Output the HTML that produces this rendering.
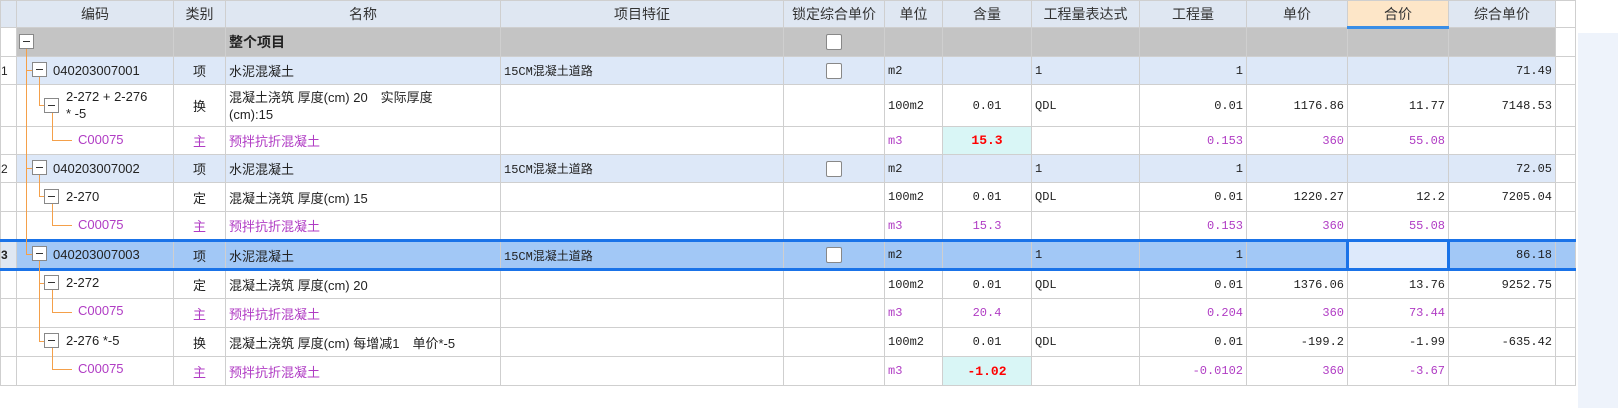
<!DOCTYPE html>
<html><head><meta charset="utf-8"><style>
*{margin:0;padding:0;box-sizing:border-box}
body{width:1618px;height:408px;background:#fff;position:relative;overflow:hidden;font-family:"Liberation Sans","Noto Sans CJK SC",sans-serif;font-size:13px;color:#222}
table{position:absolute;left:0;top:0;border-collapse:collapse;table-layout:fixed;width:1575px}
td,th{border:1px solid #cfcfcf;white-space:nowrap;overflow:hidden;padding:0 3px;vertical-align:middle}
th{background:#dfe7f2;font-weight:normal;font-size:14px;color:#333;height:27px;text-align:center}
th.hj{background:#fde6c8;border-bottom:3px solid #3a8ee6}
.n{font-family:"Liberation Mono","Noto Sans CJK SC",monospace;font-size:12px;text-align:right}
.l{font-family:"Liberation Mono","Noto Sans CJK SC",monospace;font-size:12px;text-align:left}
.c{text-align:center}
.p{color:#b03cc4}
.tot td{background:#c4c4c4}
.it td{background:#dde8f8}
.sel td{background:#a2c8f6;border-top:3px solid #1a73e8;border-bottom:3px solid #1a73e8}
.cb{display:inline-block;width:16px;height:16px;background:#fff;border:1px solid #888;border-radius:2px;vertical-align:middle}
.hl{background:#d9f6f6!important}
.red{color:#f00;font-weight:bold;font-size:13px;font-family:"Liberation Mono",monospace}
td.rn{background:#fff;padding:0;font-size:12px}
.box{position:absolute;width:15px;height:15px;border:1px solid #888;background:#fff}
.box:after{content:"";position:absolute;left:3px;top:6px;width:7px;height:1px;background:#333}
.ln{position:absolute;background:#f4a04a}
.code{position:absolute;font-family:"Liberation Sans",sans-serif;font-size:13px;line-height:15px}
</style></head><body>
<div style="position:absolute;left:1578px;top:0;width:40px;height:408px;background:#eef3fb"></div>
<div style="position:absolute;left:1578px;top:0;width:40px;height:33px;background:#fff"></div>
<table>
<colgroup><col style="width:16px"><col style="width:157px"><col style="width:52px"><col style="width:275px"><col style="width:283px"><col style="width:101px"><col style="width:58px"><col style="width:89px"><col style="width:108px"><col style="width:107px"><col style="width:101px"><col style="width:101px"><col style="width:107px"><col style="width:20px"></colgroup>
<tr><th></th><th>编码</th><th>类别</th><th>名称</th><th>项目特征</th><th>锁定综合单价</th><th>单位</th><th>含量</th><th>工程量表达式</th><th>工程量</th><th>单价</th><th class="hj">合价</th><th>综合单价</th><th style="background:#fff"></th></tr>
<tr class="tot" style="height:29px"><td class="rn"></td><td></td><td></td><td style="font-weight:bold;font-size:14px">整个项目</td><td></td><td class="c"><span class="cb"></span></td><td></td><td></td><td></td><td></td><td></td><td></td><td></td><td style="background:#fff"></td></tr>
<tr class="it" style="height:28px"><td class="rn">1</td><td></td><td class="c">项</td><td>水泥混凝土</td><td class="l">15CM混凝土道路</td><td class="c"><span class="cb"></span></td><td class="l">m2</td><td></td><td class="l">1</td><td class="n">1</td><td></td><td></td><td class="n">71.49</td><td style="background:#fff"></td></tr>
<tr style="height:42px"><td class="rn"></td><td></td><td class="c">换</td><td style="line-height:17px">混凝土浇筑 厚度(cm) 20　实际厚度<br>(cm):15</td><td></td><td></td><td class="l">100m2</td><td class="n" style="text-align:center">0.01</td><td class="l">QDL</td><td class="n">0.01</td><td class="n">1176.86</td><td class="n">11.77</td><td class="n">7148.53</td><td></td></tr>
<tr style="height:28px"><td class="rn"></td><td></td><td class="c p">主</td><td class="p">预拌抗折混凝土</td><td></td><td></td><td class="l p">m3</td><td class="hl c red">15.3</td><td></td><td class="n p">0.153</td><td class="n p">360</td><td class="n p">55.08</td><td></td><td></td></tr>
<tr class="it" style="height:28px"><td class="rn">2</td><td></td><td class="c">项</td><td>水泥混凝土</td><td class="l">15CM混凝土道路</td><td class="c"><span class="cb"></span></td><td class="l">m2</td><td></td><td class="l">1</td><td class="n">1</td><td></td><td></td><td class="n">72.05</td><td style="background:#fff"></td></tr>
<tr style="height:29px"><td class="rn"></td><td></td><td class="c">定</td><td>混凝土浇筑 厚度(cm) 15</td><td></td><td></td><td class="l">100m2</td><td class="n" style="text-align:center">0.01</td><td class="l">QDL</td><td class="n">0.01</td><td class="n">1220.27</td><td class="n">12.2</td><td class="n">7205.04</td><td></td></tr>
<tr style="height:29px"><td class="rn"></td><td></td><td class="c p">主</td><td class="p">预拌抗折混凝土</td><td></td><td></td><td class="l p">m3</td><td class="n p" style="text-align:center">15.3</td><td></td><td class="n p">0.153</td><td class="n p">360</td><td class="n p">55.08</td><td></td><td></td></tr>
<tr class="sel" style="height:29px"><td class="rn" style="background:#dfe7f2;font-weight:bold">3</td><td></td><td class="c">项</td><td>水泥混凝土</td><td class="l">15CM混凝土道路</td><td class="c"><span class="cb"></span></td><td class="l">m2</td><td></td><td class="l">1</td><td class="n">1</td><td></td><td style="background:#dde9fb;border:3px solid #1a73e8"></td><td class="n">86.18</td><td></td></tr>
<tr style="height:29px"><td class="rn"></td><td></td><td class="c">定</td><td>混凝土浇筑 厚度(cm) 20</td><td></td><td></td><td class="l">100m2</td><td class="n" style="text-align:center">0.01</td><td class="l">QDL</td><td class="n">0.01</td><td class="n">1376.06</td><td class="n">13.76</td><td class="n">9252.75</td><td></td></tr>
<tr style="height:29px"><td class="rn"></td><td></td><td class="c p">主</td><td class="p">预拌抗折混凝土</td><td></td><td></td><td class="l p">m3</td><td class="n p" style="text-align:center">20.4</td><td></td><td class="n p">0.204</td><td class="n p">360</td><td class="n p">73.44</td><td></td><td></td></tr>
<tr style="height:29px"><td class="rn"></td><td></td><td class="c">换</td><td>混凝土浇筑 厚度(cm) 每增减1　单价*-5</td><td></td><td></td><td class="l">100m2</td><td class="n" style="text-align:center">0.01</td><td class="l">QDL</td><td class="n">0.01</td><td class="n">-199.2</td><td class="n">-1.99</td><td class="n">-635.42</td><td></td></tr>
<tr style="height:29px"><td class="rn"></td><td></td><td class="c p">主</td><td class="p">预拌抗折混凝土</td><td></td><td></td><td class="l p">m3</td><td class="hl c red">-1.02</td><td></td><td class="n p">-0.0102</td><td class="n p">360</td><td class="n p">-3.67</td><td></td><td></td></tr>
</table>
<div class="ln" style="left:26px;top:49px;width:1px;height:206px"></div>
<div class="ln" style="left:26px;top:70px;width:6px;height:1px"></div>
<div class="ln" style="left:26px;top:168px;width:6px;height:1px"></div>
<div class="ln" style="left:26px;top:254px;width:6px;height:1px"></div>
<div class="ln" style="left:39px;top:77px;width:1px;height:28px"></div><div class="ln" style="left:39px;top:105px;width:5px;height:1px"></div>
<div class="ln" style="left:52px;top:112px;width:1px;height:28px"></div><div class="ln" style="left:52px;top:140px;width:20px;height:1px"></div>
<div class="ln" style="left:39px;top:175px;width:1px;height:22px"></div><div class="ln" style="left:39px;top:196px;width:5px;height:1px"></div>
<div class="ln" style="left:52px;top:203px;width:1px;height:22px"></div><div class="ln" style="left:52px;top:225px;width:20px;height:1px"></div>
<div class="ln" style="left:39px;top:261px;width:1px;height:80px"></div><div class="ln" style="left:39px;top:283px;width:5px;height:1px"></div><div class="ln" style="left:39px;top:341px;width:5px;height:1px"></div>
<div class="ln" style="left:52px;top:290px;width:1px;height:22px"></div><div class="ln" style="left:52px;top:312px;width:20px;height:1px"></div>
<div class="ln" style="left:52px;top:348px;width:1px;height:22px"></div><div class="ln" style="left:52px;top:369px;width:20px;height:1px"></div>
<div class="box" style="left:19px;top:34px"></div>
<div class="box" style="left:32px;top:62px"></div><div class="code" style="left:53px;top:63px">040203007001</div>
<div class="box" style="left:44px;top:98px"></div><div class="code" style="left:66px;top:88px;line-height:17px">2-272 + 2-276<br>* -5</div>
<div class="code p" style="left:78px;top:132px">C00075</div>
<div class="box" style="left:32px;top:160px"></div><div class="code" style="left:53px;top:161px">040203007002</div>
<div class="box" style="left:44px;top:189px"></div><div class="code" style="left:66px;top:189px">2-270</div>
<div class="code p" style="left:78px;top:217px">C00075</div>
<div class="box" style="left:32px;top:246px"></div><div class="code" style="left:53px;top:247px">040203007003</div>
<div class="box" style="left:44px;top:275px"></div><div class="code" style="left:66px;top:275px">2-272</div>
<div class="code p" style="left:78px;top:303px">C00075</div>
<div class="box" style="left:44px;top:333px"></div><div class="code" style="left:66px;top:333px">2-276 *-5</div>
<div class="code p" style="left:78px;top:361px">C00075</div>
</body></html>
